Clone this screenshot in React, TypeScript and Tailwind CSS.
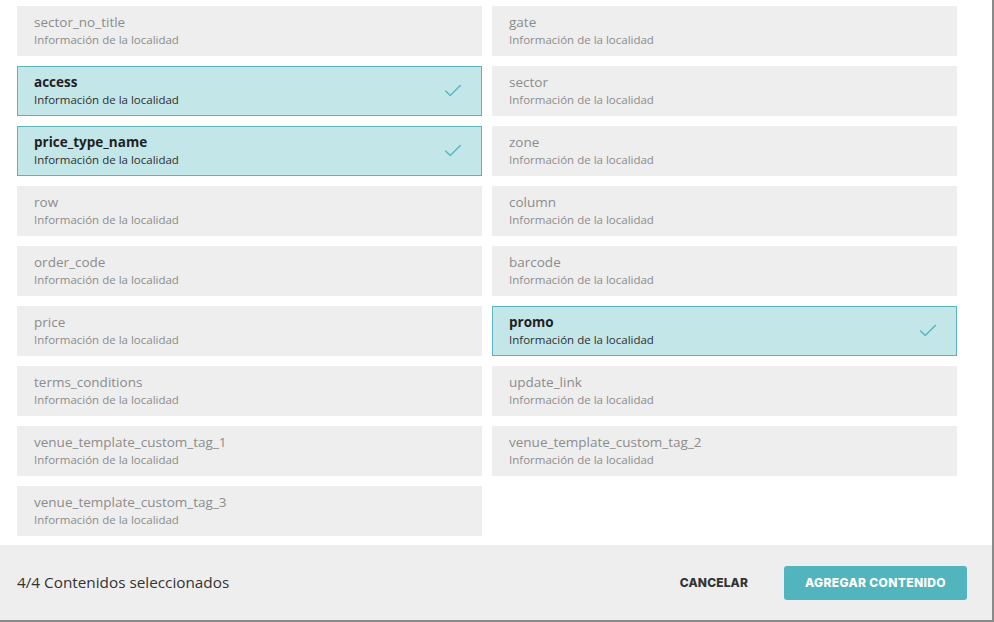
import { Check } from 'lucide-react'

type Field = { name: string; selected?: boolean }

const fields: Field[] = [
  { name: 'sector_no_title' },
  { name: 'gate' },
  { name: 'access', selected: true },
  { name: 'sector' },
  { name: 'price_type_name', selected: true },
  { name: 'zone' },
  { name: 'row' },
  { name: 'column' },
  { name: 'order_code' },
  { name: 'barcode' },
  { name: 'price' },
  { name: 'promo', selected: true },
  { name: 'terms_conditions' },
  { name: 'update_link' },
  { name: 'venue_template_custom_tag_1' },
  { name: 'venue_template_custom_tag_2' },
  { name: 'venue_template_custom_tag_3' },
]

function FieldCard({ field }: { field: Field }) {
  const on = field.selected
  return (
    <div
      className={`flex h-[50px] items-center justify-between pl-[16px] pr-[17px] border ${
        on ? 'bg-[#c3e6e9] border-[#59b4bd]' : 'bg-[#eeeeee] border-[#eeeeee]'
      }`}
    >
      <div className="flex flex-col">
        <span
          className={`text-[13.5px] leading-[17px] ${
            on ? 'font-bold text-[#1f1f1f]' : 'text-[#8c8c8c]'
          }`}
        >
          {field.name}
        </span>
        <span className={`text-[11.5px] leading-[18px] ${on ? 'text-[#2e2e2e]' : 'text-[#8c8c8c]'}`}>
          Información de la localidad
        </span>
      </div>
      {on && <Check className="h-[22px] w-[22px] text-[#5ab7bf]" strokeWidth={1.6} />}
    </div>
  )
}

export default function App() {
  return (
    <div
      className="h-[622px] w-[994px] bg-white"
      style={{ fontFamily: '"Open Sans", "Noto Sans", sans-serif' }}
    >
      <div className="flex h-[620px] w-[992px] flex-col border-r-2 border-b-2 border-[#8a8a8a] box-content">
        <div className="flex-1 pt-[6px] pl-[17px] pr-[35px]">
          <div className="grid grid-cols-2 gap-x-[10px] gap-y-[10px]">
            {fields.map((f) => (
              <FieldCard key={f.name} field={f} />
            ))}
          </div>
        </div>

        {/* footer */}
        <div className="flex h-[75px] items-center justify-between bg-[#eeeeee] pl-[17px] pr-[25px]">
          <span className="text-[15.3px] text-[#333333]">4/4 Contenidos seleccionados</span>
          <div className="flex items-center gap-[36px]">
            <button
              type="button"
              className="text-[12px] font-extrabold tracking-[0.01em] text-[#333333]"
              style={{ fontFamily: 'Inter, "Open Sans", sans-serif' }}
            >
              CANCELAR
            </button>
            <button
              type="button"
              className="h-[34px] w-[183px] rounded-[3px] bg-[#52b5be] text-[12px] font-extrabold tracking-[0.03em] text-white"
              style={{ fontFamily: 'Inter, "Open Sans", sans-serif' }}
            >
              AGREGAR CONTENIDO
            </button>
          </div>
        </div>
      </div>
    </div>
  )
}
